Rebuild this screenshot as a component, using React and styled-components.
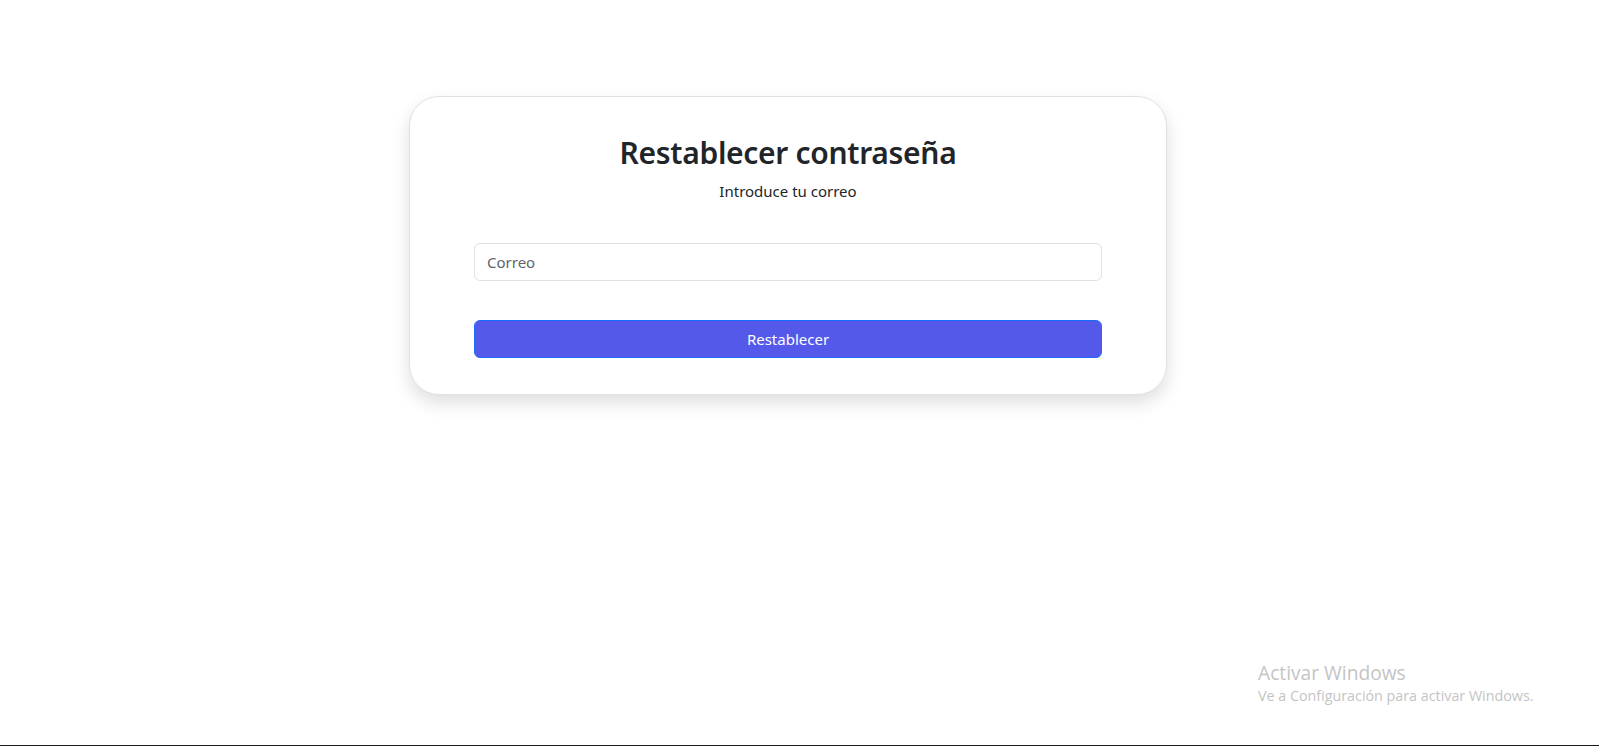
import React from 'react'
import styled, { createGlobalStyle } from 'styled-components'

const GlobalStyle = createGlobalStyle`
	* {
		box-sizing: border-box;
	}
	body {
		margin: 0;
		background: #ffffff;
		font-family: 'Noto Sans', 'Open Sans', sans-serif;
		color: #212529;
	}
`

const Page = styled.div`
	position: relative;
	height: 746px;
	padding: 96px 0 0 409px;
	border-bottom: 1px solid #1b1b1b;
	overflow: hidden;
`

const Card = styled.form`
	width: 758px;
	padding: 37px 64px 36px;
	background: #ffffff;
	border: 1px solid #dee2e6;
	border-radius: 30px;
	box-shadow: 0 8px 18px rgba(0, 0, 0, 0.13);
	display: flex;
	flex-direction: column;
	align-items: stretch;
`

const Title = styled.h2`
	margin: 0;
	text-align: center;
	font-size: 30px;
	font-weight: 600;
	line-height: 38px;
	letter-spacing: -0.3px;
	color: #212529;
`

const Subtitle = styled.p`
	margin: 8px 0 0;
	text-align: center;
	font-size: 15px;
	line-height: 22px;
	color: #212529;
`

const Input = styled.input`
	margin-top: 41px;
	height: 38px;
	width: 100%;
	padding: 0 12px;
	border: 1px solid #dee2e6;
	border-radius: 6px;
	font-family: inherit;
	font-size: 15px;
	color: #212529;
	outline: none;
	&::placeholder {
		color: #5f656b;
	}
`

const Button = styled.button`
	margin-top: 39px;
	height: 38px;
	width: 100%;
	border: 1px solid #1a6dfb;
	border-radius: 6px;
	background: #5459ea;
	color: #ffffff;
	font-family: inherit;
	font-size: 15px;
	cursor: pointer;
	&:hover {
		opacity: 0.9;
	}
`

const Watermark = styled.div`
	position: absolute;
	left: 1258px;
	top: 661px;
	color: #c4c4c4;
	font-family: 'Open Sans', sans-serif;
	line-height: 1.2;
	h3 {
		margin: 0;
		font-size: 19.2px;
		font-weight: 400;
	}
	p {
		margin: 3px 0 0;
		font-size: 14.3px;
	}
`

const App = () => {
	return (
		<>
			<GlobalStyle />
			<Page>
				<Card onSubmit={(e) => e.preventDefault()}>
					<Title>Restablecer contraseña</Title>
					<Subtitle>Introduce tu correo</Subtitle>
					<Input type='email' placeholder='Correo' />
					<Button type='submit'>Restablecer</Button>
				</Card>
				<Watermark>
					<h3>Activar Windows</h3>
					<p>Ve a Configuración para activar Windows.</p>
				</Watermark>
			</Page>
		</>
	)
}

export default App
